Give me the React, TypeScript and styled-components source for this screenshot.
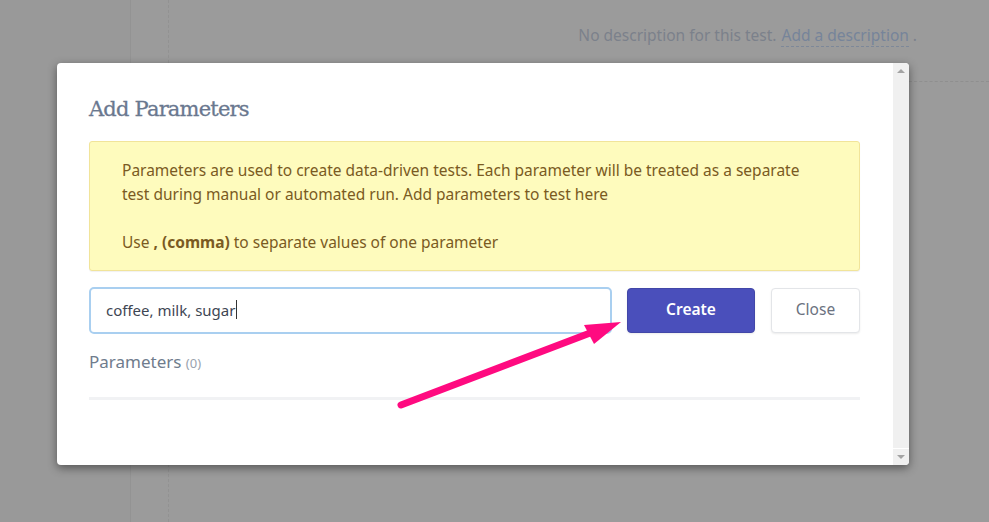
import React from "react";
import styled, { createGlobalStyle } from "styled-components";

const GlobalStyle = createGlobalStyle`
  html, body { margin: 0; padding: 0; }
  body {
    background: #9b9b9b;
    overflow: hidden;
    font-family: "Noto Sans", "Open Sans", sans-serif;
  }
`;

const Page = styled.div`
  position: relative;
  width: 989px;
  height: 522px;
  display: flex;
  background: #9b9b9b;
  overflow: hidden;
`;

const Sidebar = styled.div`
  width: 130px;
  flex: none;
  background: #999999;
  border-right: 1px solid #939393;
`;

const Main = styled.div`
  flex: 1;
  padding-left: 37px;
  display: flex;
`;

const Content = styled.div`
  flex: 1;
  border-left: 1px dashed #929292;
  display: flex;
  flex-direction: column;
`;

const DescRow = styled.div`
  display: flex;
  justify-content: flex-end;
  padding: 24px 72px 0 0;
  font-size: 15.5px;
  color: #7b818b;
  line-height: 22px;
`;

const DescLink = styled.span`
  color: #76849a;
  border-bottom: 1px dashed #7d8899;
  margin-left: 5px;
  margin-right: 4px;
`;

const DashedRule = styled.div`
  margin-top: 34px;
  margin-left: auto;
  width: 80px;
  border-top: 1px dashed #8f8f8f;
`;

const Modal = styled.div`
  position: absolute;
  left: 57px;
  top: 63px;
  width: 852px;
  height: 402px;
  display: flex;
  background: #ffffff;
  border-radius: 4px;
  box-shadow: 0 3px 10px rgba(0, 0, 0, 0.45);
  overflow: hidden;
`;

const Body = styled.div`
  flex: 1;
  padding: 31px 33px 0 32px;
  display: flex;
  flex-direction: column;
`;

const Title = styled.h2`
  margin: 0;
  font-family: "DejaVu Serif", serif;
  font-weight: normal;
  font-size: 21px;
  line-height: 30px;
  color: #6a788f;
  letter-spacing: -0.8px;
  -webkit-text-stroke: 0.3px #6a788f;
`;

const Alert = styled.div`
  margin-top: 17px;
  background: #fefbbd;
  border: 1px solid #f1e49a;
  border-radius: 3px;
  padding: 16px 32px;
  color: #7a5a22;
  font-size: 15.5px;
  line-height: 24px;
  box-shadow: 0 1px 1px rgba(0, 0, 0, 0.06);
`;

const AlertLine = styled.p`
  margin: 0;
  min-height: 24px;
`;

const Row = styled.div`
  margin-top: 16px;
  display: flex;
  align-items: center;
  gap: 15px;
`;

const Input = styled.div`
  box-sizing: border-box;
  width: 523px;
  height: 47px;
  border: 2px solid #a9cff0;
  border-radius: 5px;
  padding: 0 15px 2px;
  display: flex;
  align-items: center;
  font-size: 15px;
  color: #3e4653;
`;

const Caret = styled.span`
  display: inline-block;
  width: 1px;
  height: 19px;
  background: #333;
  margin-left: 1px;
`;

const Button = styled.button<{ $primary?: boolean }>`
  box-sizing: border-box;
  height: 45px;
  width: ${(p) => (p.$primary ? "128px" : "89px")};
  margin-left: ${(p) => (p.$primary ? "0" : "1px")};
  border-radius: 4px;
  font-family: "Noto Sans", sans-serif;
  font-size: 15.5px;
  font-weight: ${(p) => (p.$primary ? 600 : 400)};
  color: ${(p) => (p.$primary ? "#ffffff" : "#6b7280")};
  background: ${(p) => (p.$primary ? "#4a4fbb" : "#ffffff")};
  border: 1px solid ${(p) => (p.$primary ? "#4247a8" : "#e3e5e8")};
  box-shadow: 0 1px 2px rgba(0, 0, 0, 0.08);
  padding: 0 0 3px;
`;

const ParamsHeading = styled.div`
  margin-top: 16px;
  font-size: 17px;
  line-height: 24px;
  color: #6f7c8d;
`;

const Count = styled.span`
  font-size: 13px;
  color: #9aa3ae;
`;

const Rule = styled.div`
  margin-top: 22px;
  height: 3px;
  background: #f1f2f4;
`;

const Scrollbar = styled.div`
  width: 16px;
  flex: none;
  background: #f0f0f0;
  display: flex;
  flex-direction: column;
  justify-content: space-between;
  align-items: stretch;
`;

const ScrollArrow = styled.div<{ $down?: boolean }>`
  height: 16px;
  display: flex;
  align-items: center;
  justify-content: center;
  border-top: ${(p) => (p.$down ? "1px solid #ffffff" : "none")};
  &::after {
    content: "";
    width: 0;
    height: 0;
    border-left: 4px solid transparent;
    border-right: 4px solid transparent;
    ${(p) =>
      p.$down
        ? "border-top: 4px solid #a3a3a3;"
        : "border-bottom: 4px solid #a3a3a3;"}
  }
`;

const ArrowOverlay = styled.svg`
  position: absolute;
  left: 0;
  top: 0;
  pointer-events: none;
`;

export default function App() {
  return (
    <>
      <GlobalStyle />
      <Page>
        <Sidebar />
        <Main>
          <Content>
            <DescRow>
              No description for this test.
              <DescLink>Add a description</DescLink>.
            </DescRow>
            <DashedRule />
          </Content>
        </Main>
        <Modal>
          <Body>
            <Title>Add Parameters</Title>
            <Alert>
              <AlertLine>
                Parameters are used to create data-driven tests. Each parameter will be treated as a separate
                <br />
                test during manual or automated run. Add parameters to test here
              </AlertLine>
              <AlertLine />
              <AlertLine>
                Use <b>, (comma)</b> to separate values of one parameter
              </AlertLine>
            </Alert>
            <Row>
              <Input>
                coffee, milk, sugar<Caret />
              </Input>
              <Button $primary>Create</Button>
              <Button>Close</Button>
            </Row>
            <ParamsHeading>
              Parameters <Count>(0)</Count>
            </ParamsHeading>
            <Rule />
          </Body>
          <Scrollbar>
            <ScrollArrow />
            <ScrollArrow $down />
          </Scrollbar>
        </Modal>
        <ArrowOverlay width="989" height="522" viewBox="0 0 989 522">
          <line x1="401" y1="405" x2="598" y2="330" stroke="#ff0a80" strokeWidth="7" strokeLinecap="round" />
          <polygon points="621,322 584,325 594,344" fill="#ff0a80" />
        </ArrowOverlay>
      </Page>
    </>
  );
}
